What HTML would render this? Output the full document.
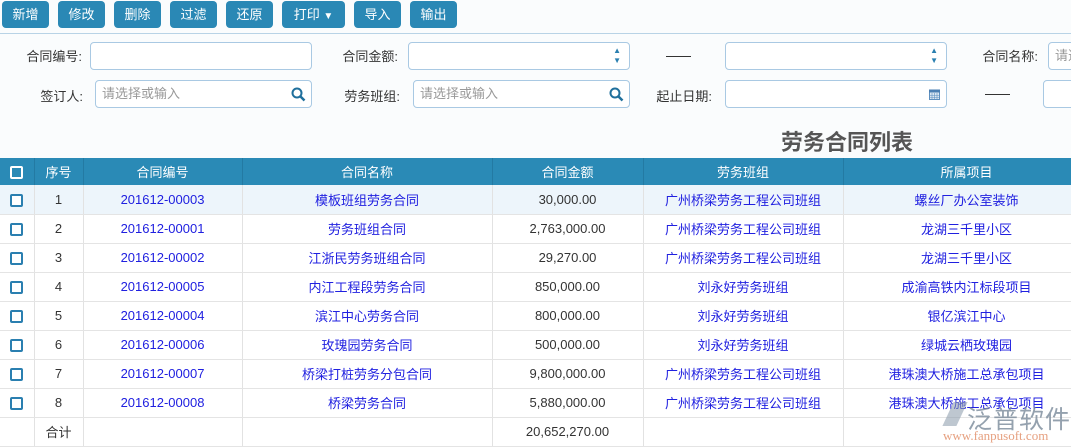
<!DOCTYPE html>
<html><head><meta charset="utf-8"><style>
*{margin:0;padding:0;box-sizing:border-box}
body{width:1071px;height:447px;overflow:hidden;background:#fafcfd;font-family:"Liberation Sans","Noto Sans CJK SC",sans-serif;font-size:13px;color:#333;position:relative}
.btn{position:absolute;top:1px;height:27px;background:#2a88b5;color:#fff;border-radius:4px;font-size:13px;line-height:27px;text-align:center}
.line{position:absolute;left:0;top:33px;width:1071px;height:1px;background:#b8d3e6}
.lab{position:absolute;font-size:13px;color:#333;text-align:right}
.inp{position:absolute;height:28px;border:1px solid #a9c9e3;border-radius:4px;background:#fff;color:#999;font-size:13px;line-height:26px;padding-left:6px}
.dash{position:absolute;width:25px;height:1px;background:#333}
.title{position:absolute;left:781px;top:125px;font-size:22px;font-weight:bold;color:#555}
table{position:absolute;left:0;top:158px;border-collapse:collapse;table-layout:fixed;width:1090px}
td,th{height:29px;text-align:center;font-size:13px;font-weight:normal;border-right:1px solid #e2e2e2;border-bottom:1px solid #e4e4e4;white-space:nowrap;overflow:hidden}
th{height:27px;background:#2a8ab6;color:#fff;border-right:1px solid #237aa3;border-bottom:none}
td{background:#fff}
tr.a td{background:#edf5fb}
.l{color:#2020e0}
.cb{display:inline-block;width:13px;height:13px;border:2px solid #2a7fb0;border-radius:2px;vertical-align:middle;background:#fff}
th .cb{border-color:#fff;background:transparent}
</style></head><body>
<div class="btn" style="left:2px;width:47px">新增</div>
<div class="btn" style="left:58px;width:47px">修改</div>
<div class="btn" style="left:114px;width:47px">删除</div>
<div class="btn" style="left:170px;width:47px">过滤</div>
<div class="btn" style="left:226px;width:47px">还原</div>
<div class="btn" style="left:282px;width:63px">打印 <span style="font-size:10px">▼</span></div>
<div class="btn" style="left:354px;width:47px">导入</div>
<div class="btn" style="left:410px;width:47px">输出</div>
<div class="line"></div>

<div class="lab" style="left:6px;top:46px;width:76px">合同编号:</div>
<div class="inp" style="left:90px;top:42px;width:222px"></div>
<div class="lab" style="left:318px;top:46px;width:80px">合同金额:</div>
<div class="inp" style="left:408px;top:42px;width:222px"><span style="position:absolute;right:8px;top:0;font-size:8px;line-height:10px;color:#2a7fb0;padding-top:3px">▲<br>▼</span></div>
<div class="dash" style="left:666px;top:56px"></div>
<div class="inp" style="left:725px;top:42px;width:222px"><span style="position:absolute;right:8px;top:0;font-size:8px;line-height:10px;color:#2a7fb0;padding-top:3px">▲<br>▼</span></div>
<div class="lab" style="left:958px;top:46px;width:80px">合同名称:</div>
<div class="inp" style="left:1048px;top:42px;width:40px">请选</div>

<div class="lab" style="left:6px;top:86px;width:77px">签订人:</div>
<div class="inp" style="left:95px;top:80px;width:217px">请选择或输入<svg style="position:absolute;right:5px;top:6px" width="15" height="15" viewBox="0 0 15 15"><circle cx="6" cy="6" r="4.5" fill="none" stroke="#1f6f9c" stroke-width="2"/><line x1="9.5" y1="9.5" x2="13.5" y2="13.5" stroke="#1f6f9c" stroke-width="2.5"/></svg></div>
<div class="lab" style="left:318px;top:86px;width:82px">劳务班组:</div>
<div class="inp" style="left:413px;top:80px;width:217px">请选择或输入<svg style="position:absolute;right:5px;top:6px" width="15" height="15" viewBox="0 0 15 15"><circle cx="6" cy="6" r="4.5" fill="none" stroke="#1f6f9c" stroke-width="2"/><line x1="9.5" y1="9.5" x2="13.5" y2="13.5" stroke="#1f6f9c" stroke-width="2.5"/></svg></div>
<div class="lab" style="left:638px;top:86px;width:74px">起止日期:</div>
<div class="inp" style="left:725px;top:80px;width:222px"><svg style="position:absolute;right:6px;top:7px" width="11" height="12" viewBox="0 0 11 12"><rect x="0.5" y="2" width="10" height="9.5" fill="#dbe7f2" stroke="#5d8fbf"/><rect x="0" y="1.5" width="11" height="3" fill="#4b7fb3"/><path d="M3 5v6M5.5 5v6M8 5v6M1 7.5h9M1 9.5h9" stroke="#5d8fbf" stroke-width="0.6"/></svg></div>
<div class="dash" style="left:985px;top:94px"></div>
<div class="inp" style="left:1043px;top:80px;width:40px"></div>

<div class="title">劳务合同列表</div>

<table>
<colgroup><col style="width:34px"><col style="width:49px"><col style="width:159px"><col style="width:250px"><col style="width:151px"><col style="width:200px"><col style="width:247px"></colgroup>
<tr><th><span class="cb"></span></th><th>序号</th><th>合同编号</th><th>合同名称</th><th>合同金额</th><th>劳务班组</th><th>所属项目</th></tr>
<tr class="a"><td><span class="cb"></span></td><td>1</td><td class="l">201612-00003</td><td class="l">模板班组劳务合同</td><td>30,000.00</td><td class="l">广州桥梁劳务工程公司班组</td><td class="l">螺丝厂办公室装饰</td></tr>
<tr><td><span class="cb"></span></td><td>2</td><td class="l">201612-00001</td><td class="l">劳务班组合同</td><td>2,763,000.00</td><td class="l">广州桥梁劳务工程公司班组</td><td class="l">龙湖三千里小区</td></tr>
<tr><td><span class="cb"></span></td><td>3</td><td class="l">201612-00002</td><td class="l">江浙民劳务班组合同</td><td>29,270.00</td><td class="l">广州桥梁劳务工程公司班组</td><td class="l">龙湖三千里小区</td></tr>
<tr><td><span class="cb"></span></td><td>4</td><td class="l">201612-00005</td><td class="l">内江工程段劳务合同</td><td>850,000.00</td><td class="l">刘永好劳务班组</td><td class="l">成渝高铁内江标段项目</td></tr>
<tr><td><span class="cb"></span></td><td>5</td><td class="l">201612-00004</td><td class="l">滨江中心劳务合同</td><td>800,000.00</td><td class="l">刘永好劳务班组</td><td class="l">银亿滨江中心</td></tr>
<tr><td><span class="cb"></span></td><td>6</td><td class="l">201612-00006</td><td class="l">玫瑰园劳务合同</td><td>500,000.00</td><td class="l">刘永好劳务班组</td><td class="l">绿城云栖玫瑰园</td></tr>
<tr><td><span class="cb"></span></td><td>7</td><td class="l">201612-00007</td><td class="l">桥梁打桩劳务分包合同</td><td>9,800,000.00</td><td class="l">广州桥梁劳务工程公司班组</td><td class="l">港珠澳大桥施工总承包项目</td></tr>
<tr><td><span class="cb"></span></td><td>8</td><td class="l">201612-00008</td><td class="l">桥梁劳务合同</td><td>5,880,000.00</td><td class="l">广州桥梁劳务工程公司班组</td><td class="l">港珠澳大桥施工总承包项目</td></tr>
<tr><td></td><td>合计</td><td></td><td></td><td>20,652,270.00</td><td></td><td></td></tr>
</table>
<div style="position:absolute;left:948px;top:402px;width:14px;height:24px;background:#8899aa;opacity:.55;transform:skewX(-25deg)"></div>
<div style="position:absolute;left:967px;top:400px;font-size:25px;color:#7a8a9a;opacity:.8;letter-spacing:1px">泛普软件</div>
<div style="position:absolute;left:943px;top:428px;font-size:13px;color:#e2906a;opacity:.85;font-family:'Liberation Serif',serif">www.fanpusoft.com</div>
</body></html>
